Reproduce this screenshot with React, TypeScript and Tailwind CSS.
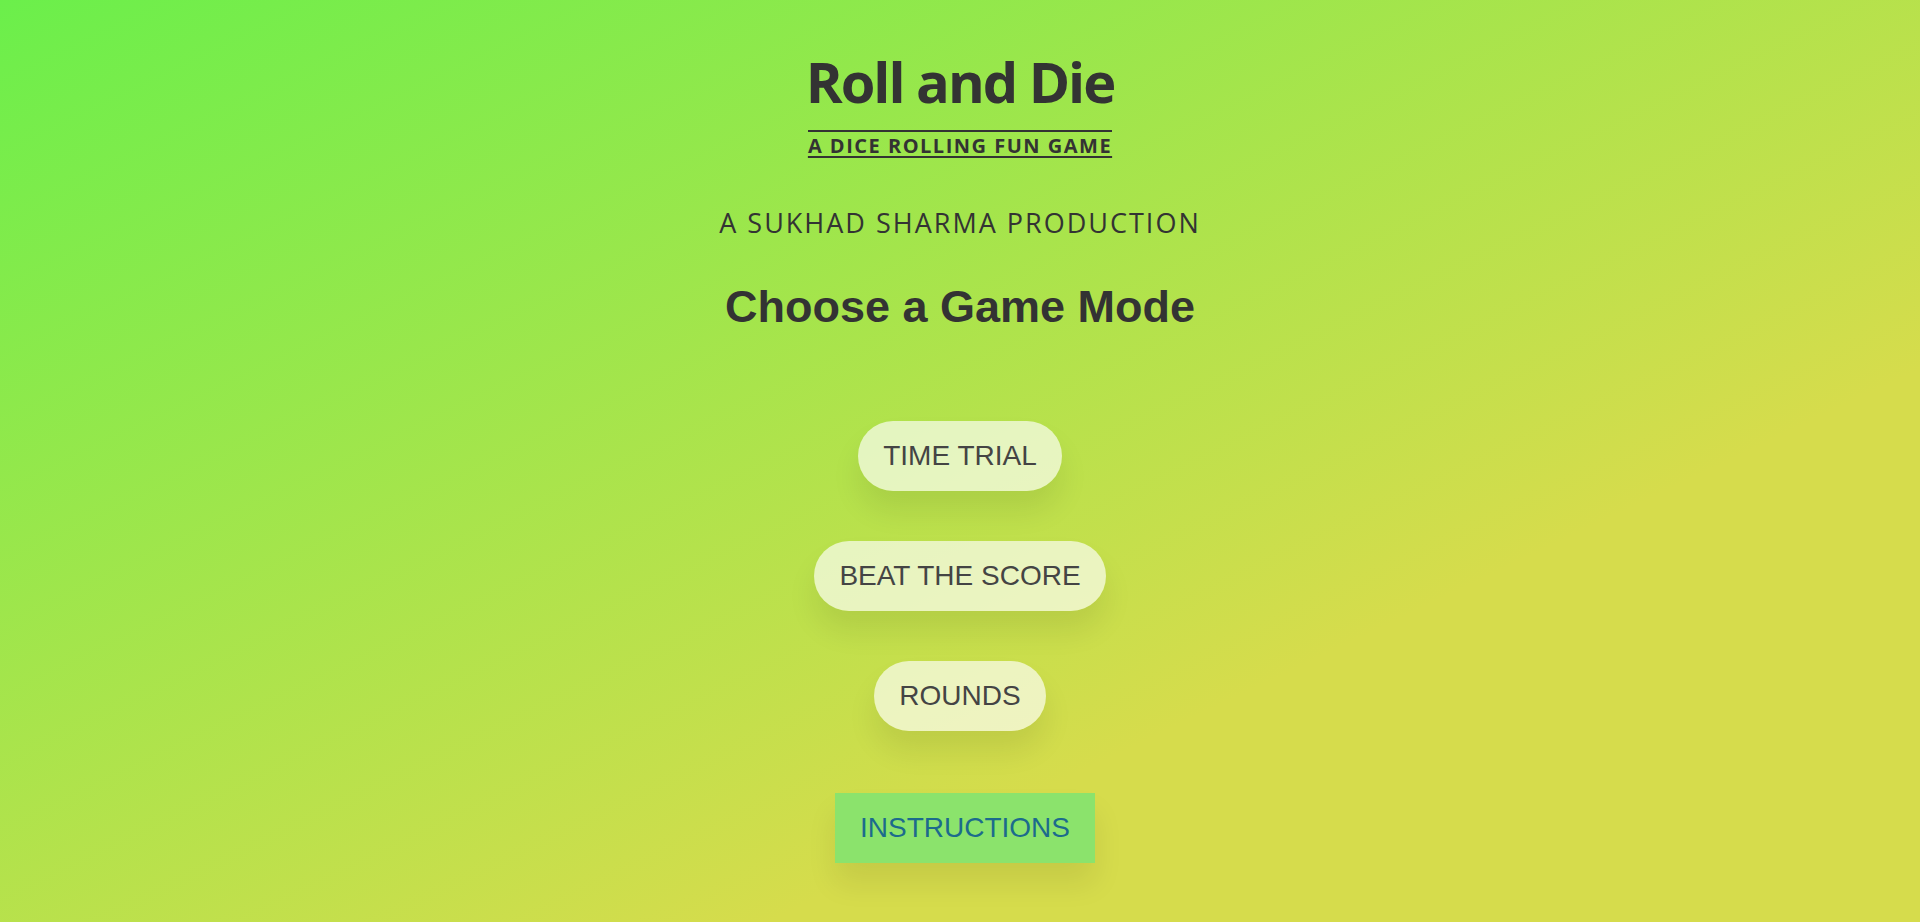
import React from "react";

export default function App() {
  return (
    <div className="min-h-[922px] w-full bg-[linear-gradient(to_bottom_right,#6bef4b_0%,#d6dc4c_70%,#d6dc4c_100%)] overflow-hidden">
      <div className="flex flex-col items-center pt-[48px]">
        <h1 className="text-[56px] leading-[1.2] font-bold text-[#333] font-['Open_Sans',sans-serif] tracking-[-2px]">
          Roll and Die
        </h1>
        <div className="mt-[15px] text-[20px] leading-[28px] font-bold text-[#333] font-['Open_Sans',sans-serif] tracking-[1.5px] underline decoration-[2px] underline-offset-[3px] border-t-2 border-[#333]">
          A DICE ROLLING FUN GAME
        </div>
        <div className="mt-[45px] text-[27px] leading-[36px] text-[#333] font-['Open_Sans',sans-serif] tracking-[2px]">
          A SUKHAD SHARMA PRODUCTION
        </div>
        <h2 className="mt-[40px] text-[45px] leading-[52px] font-bold text-[#333] font-['Liberation_Sans',Arial,sans-serif]">
          Choose a Game Mode
        </h2>
        <div className="mt-[88px] flex flex-col items-center gap-[50px] font-['Liberation_Sans',Arial,sans-serif]">
          <button className="h-[70px] px-[25px] rounded-full bg-[rgba(255,255,255,0.65)] text-[28px] text-[#444] shadow-[0_20px_30px_rgba(0,0,0,0.08)]">
            TIME TRIAL
          </button>
          <button className="h-[70px] px-[25px] rounded-full bg-[rgba(255,255,255,0.65)] text-[28px] text-[#444] shadow-[0_20px_30px_rgba(0,0,0,0.08)]">
            BEAT THE SCORE
          </button>
          <button className="h-[70px] px-[25px] rounded-full bg-[rgba(255,255,255,0.65)] text-[28px] text-[#444] shadow-[0_20px_30px_rgba(0,0,0,0.08)]">
            ROUNDS
          </button>
          <button className="mt-[12px] ml-[10px] h-[70px] px-[25px] bg-[#8be36c] text-[28px] text-[#1c6b8c] shadow-[0_20px_30px_rgba(0,0,0,0.08)]">
            INSTRUCTIONS
          </button>
        </div>
      </div>
    </div>
  );
}
